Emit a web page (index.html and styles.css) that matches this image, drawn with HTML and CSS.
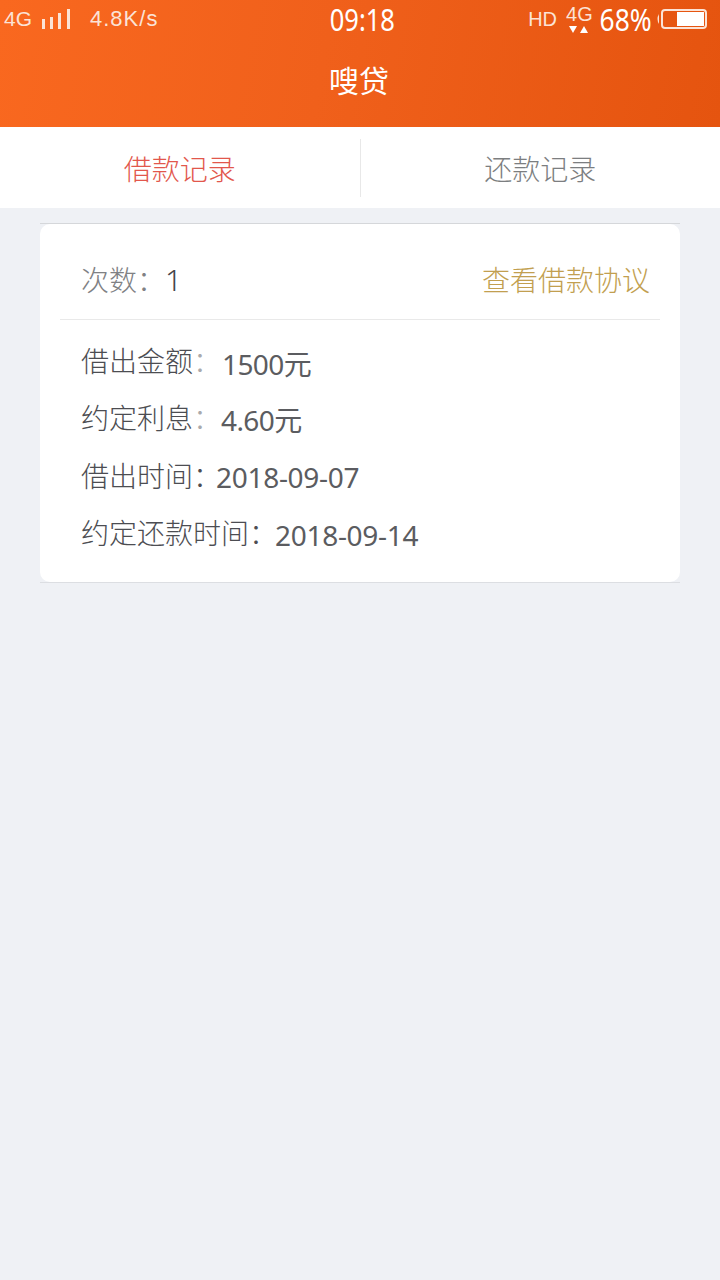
FILE: index.html
```html
<!DOCTYPE html>
<html lang="zh-CN">
<head>
  <meta charset="UTF-8">
  <title>嗖贷</title>
  <link rel="stylesheet" href="styles.css">
</head>
<body>

  <!-- Orange header with phone status bar -->
  <div class="header">
    <div class="status-bar">
      <div class="status-left">
        <span class="net">4G</span>
        <svg class="signal" width="28" height="22" viewBox="0 0 28 22">
          <rect x="0" y="11" width="3" height="10" fill="#fbe3d6"/>
          <rect x="8" y="9" width="3" height="12" fill="#fbe3d6"/>
          <rect x="16" y="5" width="3" height="16" fill="#fbe3d6"/>
          <rect x="25" y="1" width="3" height="20" fill="#fbe3d6"/>
        </svg>
        <span class="speed">4.8K/s</span>
      </div>
      <div class="clock">09:18</div>
      <div class="status-right">
        <span class="hd">HD</span>
        <span class="net-small">
          <span class="net-small-text">4G</span>
          <svg width="20" height="8" viewBox="0 0 20 8">
            <polygon points="0,0 8,0 4,7" fill="#fff"/>
            <polygon points="11,7 19,7 15,0" fill="#fff"/>
          </svg>
        </span>
        <span class="percent">68%</span>
        <svg class="battery" width="52" height="22" viewBox="0 0 52 22">
          <path d="M3 6 Q0 11 3 16 Z" fill="#fbe3d6"/>
          <rect x="6" y="2" width="44" height="18" rx="3" fill="none" stroke="#fbe3d6" stroke-width="2"/>
          <rect x="21" y="4" width="27" height="14" fill="#fff"/>
        </svg>
      </div>
    </div>
    <div class="title">嗖贷</div>
  </div>

  <!-- Tabs -->
  <div class="tabs">
    <div class="tab tab-active">借款记录</div>
    <div class="tab">还款记录</div>
  </div>

  <!-- Record card -->
  <div class="card">
    <div class="card-inner">
      <div class="card-head">
        <div class="count"><span class="count-label">次数：</span><span class="count-num">1</span></div>
        <div class="contract">查看借款协议</div>
      </div>
      <div class="card-body">
        <div class="row row-amount"><span class="label">借出金额<span class="colon">：</span></span><span class="value">1500元</span></div>
        <div class="row row-interest"><span class="label">约定利息<span class="colon">：</span></span><span class="value">4.60元</span></div>
        <div class="row row-lent"><span class="label">借出时间：</span><span class="value">2018-09-07</span></div>
        <div class="row row-due"><span class="label">约定还款时间：</span><span class="value">2018-09-14</span></div>
      </div>
    </div>
  </div>

</body>
</html>
```

FILE: styles.css
```css
/* General page styling */
body {
  margin: 0;
  background-color: #eff1f5;
  color: #55565b;
  font-family: "Noto Sans", "Noto Sans CJK SC", sans-serif;
}

/* Orange header */
.header {
  height: 127px;
  background: linear-gradient(100deg, #f9681f 0%, #f0601b 45%, #e5540f 100%);
  color: white;
}

.status-bar {
  height: 38px;
  display: flex;
  align-items: center;
  justify-content: space-between;
  padding: 0 12px 0 4px;
}

.status-left,
.status-right {
  display: flex;
  align-items: center;
  width: 236px;
  color: #fbe3d6;
}

.status-right {
  justify-content: flex-end;
}

.net {
  font-family: "Liberation Sans", sans-serif;
  font-size: 21px;
}

.signal {
  margin-left: 10px;
}

.speed {
  margin-left: 20px;
  font-family: "Liberation Sans", sans-serif;
  font-size: 22px;
  letter-spacing: 1px;
}

/* Status digits are taller and narrower than the installed fonts */
.clock {
  font-size: 30px;
  color: white;
  transform: scaleX(0.85);
  margin-left: 12px;
}

.hd {
  font-family: "Liberation Sans", sans-serif;
  font-size: 20px;
}

.net-small {
  display: flex;
  flex-direction: column;
  align-items: center;
  margin-left: 9px;
  height: 30px;
}

.net-small-text {
  font-family: "Liberation Sans", sans-serif;
  font-size: 20px;
  line-height: 21px;
}

.net-small svg {
  display: block;
  margin-top: 1px;
}

.percent {
  margin-left: 3px;
  margin-right: -1px;
  font-size: 30px;
  color: white;
  transform: scaleX(0.88);
}

.battery {
  margin-left: 2px;
}

.title {
  margin-top: 15px;
  text-align: center;
  font-size: 30px;
  line-height: 56px;
  padding-right: 2px;
}

/* Tabs */
.tabs {
  height: 81px;
  display: flex;
  align-items: center;
  background-color: white;
}

.tab {
  flex: 1;
  height: 58px;
  line-height: 60px;
  text-align: center;
  font-size: 28px;
  font-weight: 300;
  color: #7c7e80;
}

.tab-active {
  color: #e2574c;
  border-right: 1px solid #e8e8e8;
}

/* Record card: straight hairlines above and below a rounded white panel */
.card {
  margin: 15px 40px 0;
  border-top: 1px solid #d5d7da;
  border-bottom: 1px solid #dcdee2;
}

.card-inner {
  height: 358px;
  background-color: white;
  border-radius: 10px;
}

.card-head {
  box-sizing: border-box;
  height: 96px;
  margin: 0 20px;
  padding: 15px 10px 0 21px;
  display: flex;
  align-items: center;
  justify-content: space-between;
  border-bottom: 1px solid #e9e9e9;
}

.count-label {
  font-size: 28px;
  font-weight: 300;
  color: #808184;
}

.count-num {
  font-size: 30px;
  font-weight: 300;
  color: #45464a;
}

.contract {
  font-size: 28px;
  font-weight: 300;
  color: #c29f50;
}

.card-body {
  padding: 11px 0 0 41px;
}

.row {
  height: 57.5px;
  display: flex;
  align-items: center;
}

.label {
  font-size: 28px;
  font-weight: 300;
  color: #4c4d52;
}

.colon {
  color: #a9aaad;
}

.value {
  font-size: 28px;
  padding-top: 4px;
  letter-spacing: -0.3px;
  color: #5b5c60;
}

.row-amount .value {
  margin-left: 1px;
  padding-top: 6px;
  letter-spacing: -0.6px;
}

.row-interest .value {
  letter-spacing: -0.6px;
}

.row-lent .value {
  margin-left: -5px;
}

.row-due .value {
  margin-left: -2px;
  padding-top: 6px;
}
```
